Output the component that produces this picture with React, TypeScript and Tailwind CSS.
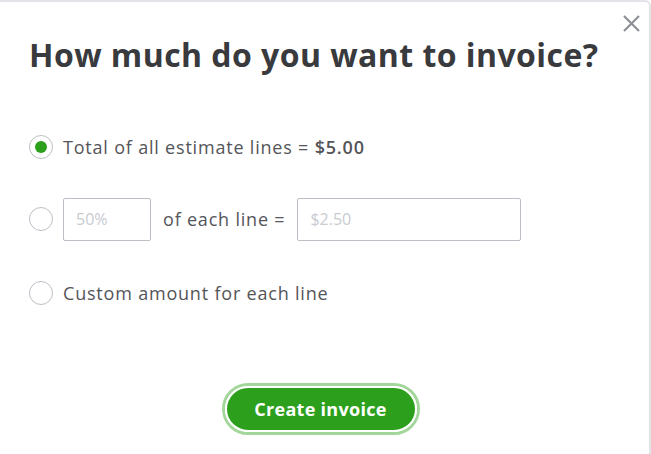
import { useState } from "react";

function Radio({ checked, onClick }: { checked: boolean; onClick: () => void }) {
  return (
    <button
      type="button"
      onClick={onClick}
      className="flex size-[24px] shrink-0 items-center justify-center rounded-full border border-[#babec5] bg-white"
    >
      {checked && <span className="size-[12px] rounded-full bg-[#2ca01c]" />}
    </button>
  );
}

export default function App() {
  const [choice, setChoice] = useState(0);

  return (
    <div className="relative h-[454px] w-[651px] overflow-hidden bg-white font-['Open_Sans',sans-serif] text-[#393a3d]">
      <div className="absolute inset-0 -left-4 rounded-tr-[6px] border-t-2 border-r-2 border-[#e3e4e8]" />

      <button
        type="button"
        aria-label="Close"
        className="absolute right-[9px] top-[12px] flex size-[22px] items-center justify-center text-[#8d9096]"
      >
        <svg width="19" height="19" viewBox="0 0 19 19" fill="none">
          <path d="M2 2L17 17M17 2L2 17" stroke="currentColor" strokeWidth="2.2" />
        </svg>
      </button>

      <div className="relative flex flex-col pl-[29px] pt-[35px]">
        <h1 className="text-[32px] font-bold leading-[40px] tracking-[0.45px] text-[#393a3d]">
          How much do you want to invoice?
        </h1>

        <div className="mt-[60px] flex h-[24px] items-center gap-[10px]">
          <Radio checked={choice === 0} onClick={() => setChoice(0)} />
          <span className="text-[18px] leading-[24px] tracking-[0.8px] text-[#545559]">
            Total of all estimate lines = <span className="font-semibold">$5.00</span>
          </span>
        </div>

        <div className="mt-[48px] flex h-[24px] items-center gap-[10px]">
          <Radio checked={choice === 1} onClick={() => setChoice(1)} />
          <input
            placeholder="50%"
            className="h-[43px] w-[88px] rounded-[2px] border border-[#babec5] px-[12px] text-[16px] outline-none placeholder:text-[#c8cbd0]"
          />
          <span className="ml-[2px] text-[18px] leading-[24px] tracking-[0.8px] text-[#545559]">
            of each line =
          </span>
          <input
            placeholder="$2.50"
            className="ml-[2px] h-[43px] w-[224px] rounded-[2px] border border-[#babec5] px-[12px] text-[16px] outline-none placeholder:text-[#c8cbd0]"
          />
        </div>

        <div className="mt-[50px] flex h-[24px] items-center gap-[10px]">
          <Radio checked={choice === 2} onClick={() => setChoice(2)} />
          <span className="text-[18px] leading-[24px] tracking-[0.8px] text-[#545559]">
            Custom amount for each line
          </span>
        </div>

        <div className="mt-[78px] flex justify-center pr-[39px]">
          <div className="rounded-full border-[3px] border-[#a3d69b] p-0">
            <button
              type="button"
              className="h-[46px] w-[192px] rounded-full border-2 border-white bg-[#2ca01c] text-[18px] font-bold tracking-[0.3px] text-white"
            >
              Create invoice
            </button>
          </div>
        </div>
      </div>
    </div>
  );
}
